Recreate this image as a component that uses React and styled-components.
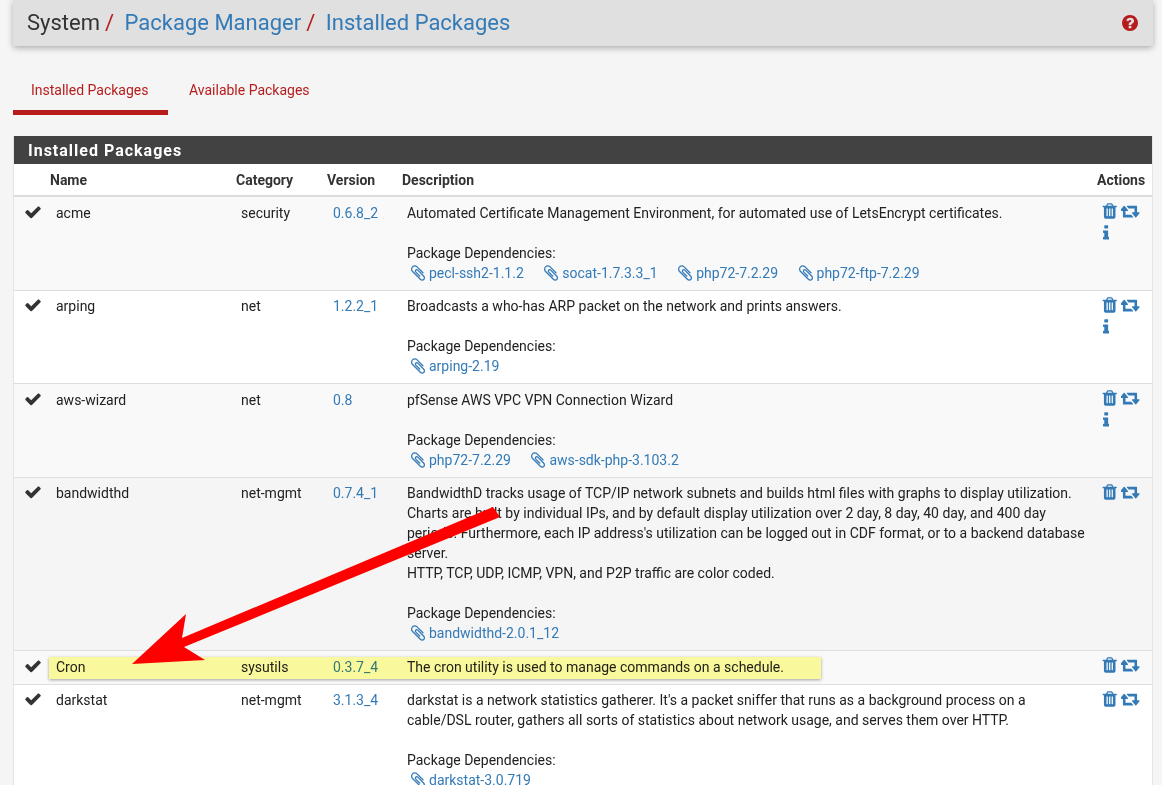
import React from 'react'
import styled, { createGlobalStyle } from 'styled-components'

const Global = createGlobalStyle`
    html, body { margin: 0; padding: 0; height: 785px; overflow: hidden; background: #f5f5f5; }
    body { font-family: Roboto, "Liberation Sans", sans-serif; font-size: 14px; line-height: 20px; color: #212121; }
`

// FontAwesome 4 glyphs, the package icons are FA5 and draw differently
const glyphs = {
    check: ['0 0 1792 1792', 'M1671 566q0 40-28 68l-724 724-136 136q-28 28-68 28t-68-28l-136-136-362-362q-28-28-28-68t28-68l136-136q28-28 68-28t68 28l294 295 656-657q28-28 68-28t68 28l136 136q28 28 28 68z'],
    trash: ['128 0 1536 1792', 'M704 1376v-704q0-14-9-23t-23-9h-64q-14 0-23 9t-9 23v704q0 14 9 23t23 9h64q14 0 23-9t9-23zm256 0v-704q0-14-9-23t-23-9h-64q-14 0-23 9t-9 23v704q0 14 9 23t23 9h64q14 0 23-9t9-23zm256 0v-704q0-14-9-23t-23-9h-64q-14 0-23 9t-9 23v704q0 14 9 23t23 9h64q14 0 23-9t9-23zm-544-992h448l-48-117q-7-9-17-11h-317q-10 2-17 11zm928 32v64q0 14-9 23t-23 9h-96v948q0 83-47 143.5t-113 60.5h-832q-66 0-113-58.5t-47-141.5v-952h-96q-14 0-23-9t-9-23v-64q0-14 9-23t23-9h309l70-167q15-37 54-63t79-26h320q40 0 79 26t54 63l70 167h309q14 0 23 9t9 23z'],
    retweet: ['0 0 1920 1792', 'M1216 1504q0 13-9.5 22.5t-22.5 9.5h-960q-8 0-13.5-2t-9-7-5.5-8-3-11.5-1-11.5v-600h-192q-26 0-45-19t-19-45q0-24 15-41l320-384q19-22 49-22t49 22l320 384q15 17 15 41 0 26-19 45t-45 19h-192v384h576q16 0 25 11l160 192q7 10 7 21zm640-416q0 24-15 41l-320 384q-20 23-49 23t-49-23l-320-384q-15-17-15-41 0-26 19-45t45-19h192v-384h-576q-16 0-25-12l-160-192q-7-9-7-20 0-13 9.5-22.5t22.5-9.5h960q8 0 13.5 2t9 7 5.5 8 3 11.5 1 11.5v600h192q26 0 45 19t19 45z'],
    info: ['576 0 640 1792', 'M1216 1344v128q0 26-19 45t-45 19h-512q-26 0-45-19t-19-45v-128q0-26 19-45t45-19h64v-384h-64q-26 0-45-19t-19-45v-128q0-26 19-45t45-19h384q26 0 45 19t19 45v576h64q26 0 45 19t19 45zm-128-1152v192q0 26-19 45t-45 19h-256q-26 0-45-19t-19-45v-192q0-26 19-45t45-19h256q26 0 45 19t19 45z'],
    clip: ['0 0 1792 1792', 'M1596 1385q0 117-79 196t-196 79q-135 0-235-100l-777-776q-113-115-113-271 0-159 110-270t269-111q158 0 273 113l605 606q10 10 10 22 0 16-30.5 46.5t-46.5 30.5q-13 0-23-10l-606-607q-79-77-181-77-106 0-179 75t-73 181q0 105 76 181l776 777q63 63 145 63 64 0 106-42t42-106q0-82-63-145l-581-581q-26-24-60-24-29 0-48 19t-19 48q0 32 25 59l410 410q10 10 10 22 0 16-31 47t-47 31q-12 0-22-10l-410-410q-63-61-63-149 0-82 57-139t139-57q88 0 149 63l581 581q100 98 100 235z'],
    help: ['128 128 1536 1536', 'M1024 1376v-192q0-14-9-23t-23-9h-192q-14 0-23 9t-9 23v192q0 14 9 23t23 9h192q14 0 23-9t9-23zm256-672q0-88-55.5-163t-138.5-116-170-41q-243 0-371 213-15 24 8 42l132 100q7 6 19 6 16 0 25-12 53-68 86-92 34-24 86-24 48 0 85.5 26t37.5 59q0 38-20 61t-68 45q-63 28-115.5 86.5t-52.5 125.5v36q0 14 9 23t23 9h192q14 0 23-9t9-23q0-19 21.5-49.5t54.5-49.5q32-18 49-28.5t46-35 44.5-48 28-60.5 12.5-81zm384 192q0 209-103 385.5t-279.5 279.5-385.5 103-385.5-103-279.5-279.5-103-385.5 103-385.5 279.5-279.5 385.5-103 385.5 103 279.5 279.5 103 385.5z'],
}

const Glyph = styled.svg`
    display: block;
    flex: none;
    height: 18px;
    fill: currentColor;
`

const Icon = ({ name, className }) => {
    const [box, d] = glyphs[name]
    const w = (Number(box.split(' ')[2]) / Number(box.split(' ')[3])) * 18
    return (
        <Glyph className={className} viewBox={box} width={w} height="18">
            <path d={d} />
        </Glyph>
    )
}

const Page = styled.div`
    position: relative;
    height: 785px;
    overflow: hidden;
    padding: 0 9px 0 13px;
`

const Header = styled.div`
    display: flex;
    align-items: center;
    justify-content: space-between;
    height: 46px;
    padding: 0 15px 0 14px;
    background: #e0e0e0;
    border-radius: 0 0 3px 3px;
    box-shadow: 0 2px 6px rgba(0, 0, 0, .3);
`

const Crumbs = styled.div`
    display: flex;
    align-items: center;
    font-size: 22px;
    line-height: 46px;
`

const Crumb = styled.span`
    color: ${p => (p.$link ? '#337ab7' : '#333')};
`

const Slash = styled.span`
    color: #b71c1c;
    margin: 0 10.5px 0 5px;
`

const Help = styled(Icon)`
    color: #b71c1c;
    height: 16px;
    width: 16px;
`

const Tabs = styled.div`
    display: flex;
    margin-top: 24px;
    height: 45px;
`

const Tab = styled.div`
    padding: 10px 18px 0 18px;
    height: 45px;
    box-sizing: border-box;
    color: #b71c1c;
    width: ${p => (p.$active ? '155px' : 'auto')};
    margin-left: ${p => (p.$active ? '0' : '3px')};
    border-bottom: 5px solid ${p => (p.$active ? '#b71c1c' : 'transparent')};
    white-space: nowrap;
`

const Panel = styled.div`
    margin-top: 21px;
    border-left: 1px solid #e4e4e4;
    border-right: 1px solid #e4e4e4;
`

const PanelTitle = styled.div`
    height: 28px;
    padding-left: 14px;
    background: #424242;
    color: #fff;
    font-size: 16px;
    font-weight: 700;
    line-height: 30px;
    letter-spacing: 1px;
`

const Cols = '36px 186px 91px 75px 1fr 55px'

const Head = styled.div`
    display: grid;
    grid-template-columns: ${Cols};
    height: 31.2px;
    line-height: 32px;
    background: #fff;
    border-bottom: 2px solid #ddd;
    font-weight: 700;
    color: #333;
`

const Row = styled.div`
    position: relative;
    display: grid;
    grid-template-columns: ${Cols};
    background: ${p => p.$bg};
    border-top: ${p => (p.$first ? '0' : '1px solid #ddd')};
`

const Cell = styled.div`
    padding: 5.5px 5px 7px ${p => p.$left || '5px'};
    min-width: 0;
`

const CheckCell = styled.div`
    padding: 5.5px 0 0 10px;
    color: #333;
`

const Version = styled(Cell)`
    color: #337ab7;
`

const DepTitle = styled.div`
    margin-top: 20px;
`

const Deps = styled.div`
    display: flex;
    gap: 18.5px;
    padding-left: 2px;
`

const Dep = styled.span`
    display: inline-flex;
    align-items: center;
    gap: 2px;
    color: #337ab7;
`

const Actions = styled.div`
    display: flex;
    flex-wrap: wrap;
    align-content: flex-start;
    gap: 4px 3.5px;
    padding: 5px 0 0 5px;
    width: 46px;
    box-sizing: border-box;
    color: #337ab7;
`

const InfoIcon = styled(Icon)`
    margin-left: 1px;
`

const Highlight = styled.div`
    position: absolute;
    left: 35px;
    top: 6px;
    width: 772px;
    height: 22px;
    background: #fffea0;
    mix-blend-mode: multiply;
    box-shadow: 0 1px 3px rgba(0, 0, 0, .35);
`

const Arrow = styled.svg`
    position: absolute;
    left: 0;
    top: 0;
    pointer-events: none;
`

const packages = [
    {
        name: 'acme', category: 'security', version: '0.6.8_2', bg: '#f9f9f9', info: true,
        lines: ['Automated Certificate Management Environment, for automated use of LetsEncrypt certificates.'],
        deps: ['pecl-ssh2-1.1.2', 'socat-1.7.3.3_1', 'php72-7.2.29', 'php72-ftp-7.2.29'],
    },
    {
        name: 'arping', category: 'net', version: '1.2.2_1', bg: '#fff', info: true,
        lines: ['Broadcasts a who-has ARP packet on the network and prints answers.'],
        deps: ['arping-2.19'],
    },
    {
        name: 'aws-wizard', category: 'net', version: '0.8', bg: '#f9f9f9', info: true,
        lines: ['pfSense AWS VPC VPN Connection Wizard'],
        deps: ['php72-7.2.29', 'aws-sdk-php-3.103.2'],
    },
    {
        name: 'bandwidthd', category: 'net-mgmt', version: '0.7.4_1', bg: '#f5f5f5',
        lines: [
            "BandwidthD tracks usage of TCP/IP network subnets and builds html files with graphs to display utilization. Charts are built by individual IPs, and by default display utilization over 2 day, 8 day, 40 day, and 400 day periods. Furthermore, each IP address's utilization can be logged out in CDF format, or to a backend database server.",
            'HTTP, TCP, UDP, ICMP, VPN, and P2P traffic are color coded.',
        ],
        deps: ['bandwidthd-2.0.1_12'],
    },
    {
        name: 'Cron', category: 'sysutils', version: '0.3.7_4', bg: '#f9f9f9', marked: true,
        lines: ['The cron utility is used to manage commands on a schedule.'],
    },
    {
        name: 'darkstat', category: 'net-mgmt', version: '3.1.3_4', bg: '#fff',
        lines: ["darkstat is a network statistics gatherer. It's a packet sniffer that runs as a background process on a cable/DSL router, gathers all sorts of statistics about network usage, and serves them over HTTP."],
        deps: ['darkstat-3.0.719'],
    },
]

const App = () => (
    <Page>
        <Global />
        <Header>
            <Crumbs>
                <Crumb>System</Crumb><Slash>/</Slash>
                <Crumb $link>Package Manager</Crumb><Slash>/</Slash>
                <Crumb $link>Installed Packages</Crumb>
            </Crumbs>
            <Help name="help" />
        </Header>
        <Tabs>
            <Tab $active>Installed Packages</Tab>
            <Tab>Available Packages</Tab>
        </Tabs>
        <Panel>
            <PanelTitle>Installed Packages</PanelTitle>
            <Head>
                <div />
                <div>Name</div>
                <div>Category</div>
                <div>Version</div>
                <div>Description</div>
                <div>Actions</div>
            </Head>
            {packages.map((p, i) => (
                <Row key={p.name} $bg={p.bg} $first={i === 0}>
                    {p.marked && <Highlight />}
                    <CheckCell><Icon name="check" /></CheckCell>
                    <Cell $left="6px">{p.name}</Cell>
                    <Cell>{p.category}</Cell>
                    <Version $left="6px">{p.version}</Version>
                    <Cell>
                        {p.lines.map(line => <div key={line}>{line}</div>)}
                        {p.deps && (
                            <>
                                <DepTitle>Package Dependencies:</DepTitle>
                                <Deps>
                                    {p.deps.map(d => <Dep key={d}><Icon name="clip" />{d}</Dep>)}
                                </Deps>
                            </>
                        )}
                    </Cell>
                    <Actions>
                        <Icon name="trash" />
                        <Icon name="retweet" />
                        {p.info && <InfoIcon name="info" />}
                    </Actions>
                </Row>
            ))}
        </Panel>
        <Arrow width="1162" height="785" viewBox="0 0 1162 785">
            <path d="M493 507 L500 517 L184 647 L205 660 L132 664 L186 614 L182 638 Z" fill="#fe0000" />
        </Arrow>
    </Page>
)

export default App
